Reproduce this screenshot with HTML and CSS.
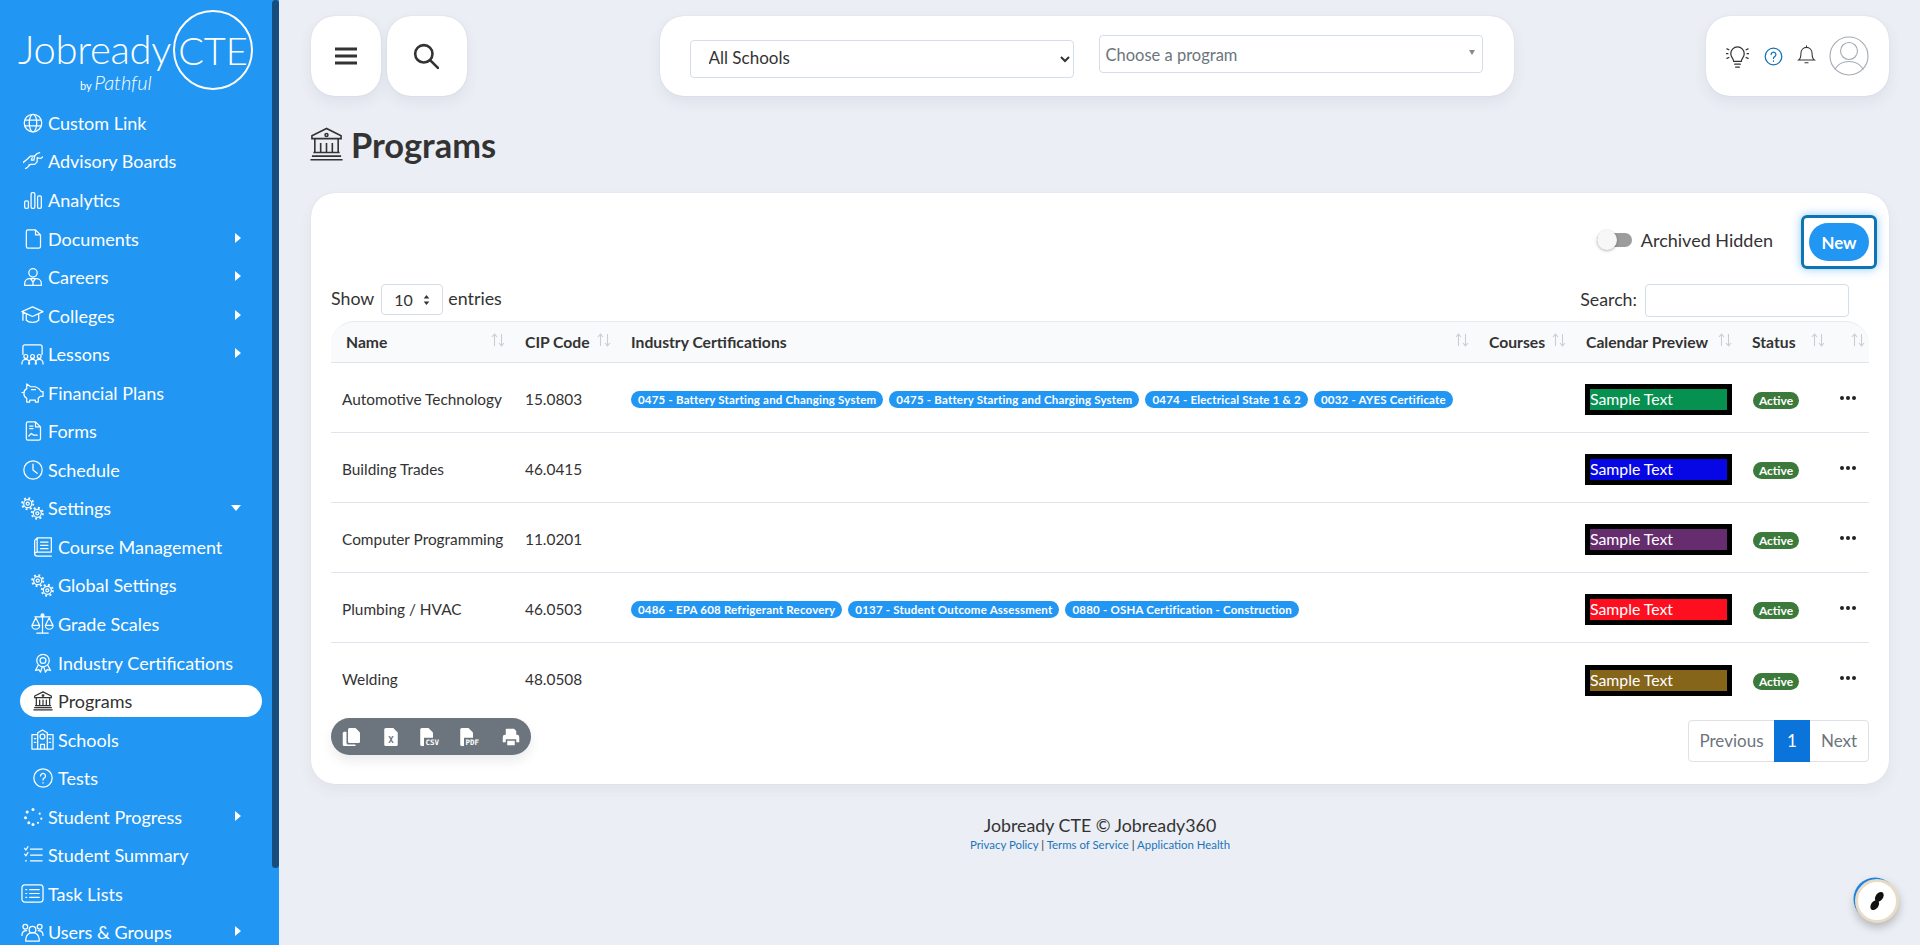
FILE: index.html
```html
<!DOCTYPE html>
<html lang="en">
<head>
  <meta charset="UTF-8">
  <title>Programs</title>
  <link rel="stylesheet" href="styles.css">
</head>
<body>

<aside class="sidebar">
  <div class="scroll-thumb"></div>

  <div class="logo">
    <span class="logo-word">Jobready</span>
    <span class="logo-circle">CTE</span>
    <span class="logo-by">by <b>Pathful</b></span>
  </div>

  <nav class="nav">
    <a class="nav-item"><svg class="ico" viewBox="0 0 24 24"><circle cx="12" cy="12" r="10.5"/><ellipse cx="12" cy="12" rx="4.5" ry="10.5"/><path d="M2.5 8.5h19M2.500 15.500h19"/></svg>Custom Link</a>
    <a class="nav-item"><svg class="ico" viewBox="0 0 24 24"><path d="M0 14l6-5 3-3h5l3-3 3-1M14 6l-1 5h-3l1-3M24 7l-3 2-4-1v5l-3 3H9l-4 4-2 1M9 16l-2 1"/></svg>Advisory Boards</a>
    <a class="nav-item"><svg class="ico" viewBox="0 0 24 24"><rect x="2" y="13" width="4.500" height="9" rx="1.500"/><rect x="9.700" y="3" width="4.500" height="19" rx="1.500"/><rect x="17.500" y="7" width="4.500" height="15" rx="1.500"/></svg>Analytics</a>
    <a class="nav-item has-sub"><svg class="ico" viewBox="0 0 24 24"><path d="M6 1h9l6 6v14a2 2 0 0 1-2 2H6a2 2 0 0 1-2-2V3a2 2 0 0 1 2-2zM15 1v6h6"/></svg>Documents</a>
    <a class="nav-item has-sub"><svg class="ico" viewBox="0 0 24 24"><circle cx="12" cy="7" r="5"/><path d="M2 22v-2c0-4 3-6 6-6h8c3 0 6 2 6 6v2zM9 14l3 4 3-4M12 18v4"/></svg>Careers</a>
    <a class="nav-item has-sub"><svg class="ico ico-wide" viewBox="0 0 24 24"><path d="M12 3L1 8l11 5 11-5zM5.500 11v6c3 3 10 3 13 0v-6M2 9v8"/></svg>Colleges</a>
    <a class="nav-item has-sub"><svg class="ico ico-wide" viewBox="0 0 24 24"><path d="M2 12V4a2 2 0 0 1 2-2h16a2 2 0 0 1 2 2v8"/><circle cx="5" cy="14" r="2"/><circle cx="12" cy="14" r="2"/><circle cx="19" cy="14" r="2"/><path d="M1 22v-1a4 4 0 0 1 8 0v1M8 22v-1a4 4 0 0 1 8 0v1M15 22v-1a4 4 0 0 1 8 0v1"/></svg>Lessons</a>
    <a class="nav-item"><svg class="ico ico-wide" viewBox="0 0 24 24"><path d="M6 8V3l4 3h5c3 1 5 3 6 5h2v5h-3l-2 2v4h-3v-2H9v2H6v-4c-2-1-3-3-3-5 0-2 1-4 3-5zM11 9h4"/><path d="M1 12h2"/></svg>Financial Plans</a>
    <a class="nav-item"><svg class="ico" viewBox="0 0 24 24"><path d="M6 1h9l6 6v14a2 2 0 0 1-2 2H6a2 2 0 0 1-2-2V3a2 2 0 0 1 2-2zM15 1v6h6M8 6h4M8 9h4M7 18l3-3 3 2 4 0"/></svg>Forms</a>
    <a class="nav-item"><svg class="ico" viewBox="0 0 24 24"><circle cx="12" cy="12" r="11"/><path d="M12 5v7l5 4"/></svg>Schedule</a>
    <a class="nav-item has-open"><svg class="ico ico-wide" viewBox="0 0 24 24"><circle cx="7" cy="7" r="1.600"/><circle cx="7" cy="7" r="4.200"/><circle cx="7" cy="7" r="5.800" class="teeth"/><circle cx="17" cy="17" r="1.600"/><circle cx="17" cy="17" r="4.200"/><circle cx="17" cy="17" r="5.800" class="teeth"/></svg>Settings</a>
    <a class="nav-item sub"><svg class="ico" viewBox="0 0 24 24"><path d="M5 18V1h17v17zM5 18c-2 0-3 1-3 2.500S3 23 5 23h17M2 20V4l3-3M9 6h9M9 10h9M9 14h9"/></svg>Course Management</a>
    <a class="nav-item sub"><svg class="ico ico-wide" viewBox="0 0 24 24"><circle cx="7" cy="7" r="1.600"/><circle cx="7" cy="7" r="4.200"/><circle cx="7" cy="7" r="5.800" class="teeth"/><circle cx="17" cy="17" r="1.600"/><circle cx="17" cy="17" r="4.200"/><circle cx="17" cy="17" r="5.800" class="teeth"/></svg>Global Settings</a>
    <a class="nav-item sub"><svg class="ico ico-wide" viewBox="0 0 24 24"><path d="M12 3v19M6 22h12M4 5h16"/><circle cx="12" cy="3.500" r="1.500"/><path d="M5 6l-4 8a4 4 0 0 0 8 0zM19 6l-4 8a4 4 0 0 0 8 0zM1 14h8M15 14h8"/></svg>Grade Scales</a>
    <a class="nav-item sub"><svg class="ico" viewBox="0 0 24 24"><circle cx="12" cy="9" r="7.500"/><circle cx="12" cy="9" r="3.500"/><path d="M6 15l-3 6 4-1 2 3 2-6M18 15l3 6-4-1-2 3-2-6"/></svg>Industry Certifications</a>
    <a class="nav-item sub active"><svg class="ico" viewBox="0 0 24 24"><path d="M12 1L2 6v2h20V6zM4 8v9M20 8v9M8 11v6M12 11v6M16 11v6M3 17.500h18M2 20h20M1 22.500h22"/><circle cx="12" cy="5.500" r="1"/></svg>Programs</a>
    <a class="nav-item sub"><svg class="ico ico-wide" viewBox="0 0 24 24"><path d="M1 22V7h6V5l5-3 5 3v2h6v15zM7 7v15M17 7v15M10 22v-5h4v5M3.500 11h1.500M3.500 15h1.500M19 11h1.500M19 15h1.500"/><circle cx="12" cy="9" r="2.500"/></svg>Schools</a>
    <a class="nav-item sub"><svg class="ico" viewBox="0 0 24 24"><circle cx="12" cy="12" r="11"/><path d="M9 9.500a3 3 0 1 1 4.500 2.600c-1 .6-1.500 1.200-1.500 2.400M12 17.500v.5"/></svg>Tests</a>
    <a class="nav-item has-sub"><svg class="ico dots" viewBox="0 0 24 24"><circle cx="12" cy="3" r="1.800"/><circle cx="5" cy="6" r="1.800"/><circle cx="20" cy="8" r="1.300"/><circle cx="3" cy="13" r="1.800"/><circle cx="22" cy="14" r="1.300"/><circle cx="7" cy="19" r="1.800"/><circle cx="18" cy="19" r="1.300"/><circle cx="12" cy="21" r="1.800"/></svg>Student Progress</a>
    <a class="nav-item"><svg class="ico" viewBox="0 0 24 24"><path d="M9 5h14M9 12h14M9 19h14M2 4l1.500 2L6 2M2 11l1.500 2L6 9M3 19h1"/></svg>Student Summary</a>
    <a class="nav-item"><svg class="ico ico-wide" viewBox="0 0 24 24"><rect x="1" y="3" width="22" height="18" rx="3"/><path d="M5 8h1M5 12h1M5 16h1M9 8h10M9 12h10M9 16h10"/></svg>Task Lists</a>
    <a class="nav-item has-sub"><svg class="ico ico-wide" viewBox="0 0 24 24"><circle cx="12" cy="9" r="3.500"/><circle cx="4.500" cy="6" r="2.500"/><circle cx="19.500" cy="6" r="2.500"/><path d="M5 21v-2a6 6 0 0 1 14 0v2zM1 15c0-3 2-5 5-5M23 15c0-3-2-5-5-5"/></svg>Users &amp; Groups</a>
  </nav>
</aside>

<main class="main">
  <header class="topbar">
    <div class="top-left">
      <button class="top-btn"><svg class="top-ico" viewBox="0 0 24 24"><path d="M1 5h22M1 12h22M1 19h22"/></svg></button>
      <button class="top-btn"><svg class="top-ico thin" viewBox="0 0 24 24"><circle cx="10" cy="10" r="8"/><path d="M16 16l7 7"/></svg></button>
    </div>

    <div class="top-filters">
      <select class="school-select"><option>All Schools</option></select>
      <div class="program-select">Choose a program<span class="caret"></span></div>
    </div>

    <div class="top-right">
      <svg class="bulb" viewBox="0 0 24 24"><path d="M8 17c0-3-3-4-3-8a7 7 0 0 1 14 0c0 4-3 5-3 8zM9 20h6M10 23h4M1 4l2 1M1 14l2-1M23 4l-2 1M23 14l-2-1M0 9h2M22 9h2"/></svg>
      <svg class="help" viewBox="0 0 24 24"><circle cx="12" cy="12" r="10.500"/><path d="M9 9.500a3 3 0 1 1 4.500 2.600c-1 .6-1.500 1.200-1.500 2.400M12 17.500v.5"/></svg>
      <svg class="bell" viewBox="0 0 24 24"><path d="M2 19c3-2 3-5 3-9a7 7 0 0 1 14 0c0 4 0 7 3 9zM10 22.500h4M12 3V1"/></svg>
      <svg class="avatar" viewBox="0 0 40 40"><circle cx="20" cy="20" r="19"/><circle cx="20" cy="15" r="8.500"/><path d="M6 33c3-5 8-7.500 14-7.500S31 28 34 33"/></svg>
    </div>
  </header>

  <h1 class="page-title"><svg class="title-ico" viewBox="0 0 24 24"><path d="M12 1L2 6v2h20V6zM4 8v9M20 8v9M8 11v6M12 11v6M16 11v6M3 17.500h18M2 20h20M1 22.500h22"/><circle cx="12" cy="5.500" r="1"/></svg>Programs</h1>

  <section class="card">
    <div class="card-tools">
      <span class="toggle"><span class="toggle-knob"></span></span>
      <span class="toggle-label">Archived Hidden</span>
      <span class="new-frame"><button class="new-btn">New</button></span>
    </div>

    <div class="table-tools">
      <div class="show-entries">Show <span class="length-box">10<svg class="updown" viewBox="0 0 10 16"><path d="M5 1l4 5H1zM5 15l4-5H1z"/></svg></span> entries</div>
      <div class="search-box">Search: <input class="search-input" type="text"></div>
    </div>

    <table class="programs">
      <thead>
        <tr>
          <th class="col-name"><div class="th-in">Name<svg class="sort" viewBox="0 0 14 14"><path d="M3.500 13V1M1 4l2.500-3L6 4M10.500 1v12M8 10l2.500 3 2.500-3"/></svg></div></th>
          <th class="col-cip"><div class="th-in">CIP Code<svg class="sort" viewBox="0 0 14 14"><path d="M3.500 13V1M1 4l2.500-3L6 4M10.500 1v12M8 10l2.500 3 2.500-3"/></svg></div></th>
          <th class="col-cert"><div class="th-in">Industry Certifications<svg class="sort" viewBox="0 0 14 14"><path d="M3.500 13V1M1 4l2.500-3L6 4M10.500 1v12M8 10l2.500 3 2.500-3"/></svg></div></th>
          <th class="col-courses"><div class="th-in">Courses<svg class="sort" viewBox="0 0 14 14"><path d="M3.500 13V1M1 4l2.500-3L6 4M10.500 1v12M8 10l2.500 3 2.500-3"/></svg></div></th>
          <th class="col-cal"><div class="th-in">Calendar Preview<svg class="sort" viewBox="0 0 14 14"><path d="M3.500 13V1M1 4l2.500-3L6 4M10.500 1v12M8 10l2.500 3 2.500-3"/></svg></div></th>
          <th class="col-status"><div class="th-in">Status<svg class="sort" viewBox="0 0 14 14"><path d="M3.500 13V1M1 4l2.500-3L6 4M10.500 1v12M8 10l2.500 3 2.500-3"/></svg></div></th>
          <th class="col-act"><div class="th-in"><svg class="sort" viewBox="0 0 14 14"><path d="M3.500 13V1M1 4l2.500-3L6 4M10.500 1v12M8 10l2.500 3 2.500-3"/></svg></div></th>
        </tr>
      </thead>
      <tbody>
        <tr>
          <td>Automotive Technology</td>
          <td>15.0803</td>
          <td><div class="certs"><span class="pill">0475 - Battery Starting and Changing System</span><span class="pill">0475 - Battery Starting and Charging System</span><span class="pill">0474 - Electrical State 1 &amp; 2</span><span class="pill">0032 - AYES Certificate</span></div></td>
          <td></td>
          <td><div class="sample green">Sample Text</div></td>
          <td><span class="status">Active</span></td>
          <td><span class="more"><i></i><i></i><i></i></span></td>
        </tr>
        <tr>
          <td>Building Trades</td>
          <td>46.0415</td>
          <td></td>
          <td></td>
          <td><div class="sample blue">Sample Text</div></td>
          <td><span class="status">Active</span></td>
          <td><span class="more"><i></i><i></i><i></i></span></td>
        </tr>
        <tr>
          <td>Computer Programming</td>
          <td>11.0201</td>
          <td></td>
          <td></td>
          <td><div class="sample purple">Sample Text</div></td>
          <td><span class="status">Active</span></td>
          <td><span class="more"><i></i><i></i><i></i></span></td>
        </tr>
        <tr>
          <td>Plumbing / HVAC</td>
          <td>46.0503</td>
          <td><div class="certs"><span class="pill">0486 - EPA 608 Refrigerant Recovery</span><span class="pill">0137 - Student Outcome Assessment</span><span class="pill">0880 - OSHA Certification - Construction</span></div></td>
          <td></td>
          <td><div class="sample red">Sample Text</div></td>
          <td><span class="status">Active</span></td>
          <td><span class="more"><i></i><i></i><i></i></span></td>
        </tr>
        <tr>
          <td>Welding</td>
          <td>48.0508</td>
          <td></td>
          <td></td>
          <td><div class="sample olive">Sample Text</div></td>
          <td><span class="status">Active</span></td>
          <td><span class="more"><i></i><i></i><i></i></span></td>
        </tr>
      </tbody>
    </table>

    <div class="table-foot">
      <div class="export">
        <button class="exp-btn"><svg viewBox="0 0 24 24"><path d="M10 0h8l6 6v12a2 2 0 0 1-2 2H10a2 2 0 0 1-2-2V2a2 2 0 0 1 2-2z"/><path d="M6 5v15a2 2 0 0 0 2 2h10v2H3a2 2 0 0 1-2-2V7a2 2 0 0 1 2-2z"/></svg></button>
        <button class="exp-btn"><svg viewBox="0 0 24 24"><path d="M5 0h10l6 6v16a2 2 0 0 1-2 2H5a2 2 0 0 1-2-2V2a2 2 0 0 1 2-2z"/><text x="12" y="20" class="file-tag dark">X</text></svg></button>
        <button class="exp-btn wide"><svg viewBox="0 0 30 24"><path d="M5 0h9l6 6v17a1 1 0 0 1-1 1H5a2 2 0 0 1-2-2V2a2 2 0 0 1 2-2z"/><rect x="8" y="13" width="22" height="11" fill="#6c757d"/><text x="19" y="23" class="file-tag">CSV</text></svg></button>
        <button class="exp-btn wide"><svg viewBox="0 0 30 24"><path d="M5 0h9l6 6v17a1 1 0 0 1-1 1H5a2 2 0 0 1-2-2V2a2 2 0 0 1 2-2z"/><rect x="8" y="13" width="22" height="11" fill="#6c757d"/><text x="19" y="23" class="file-tag">PDF</text></svg></button>
        <button class="exp-btn"><svg viewBox="0 0 24 24"><path d="M6 1h10l3 3v5H5V2a1 1 0 0 1 1-1zM1 12a3 3 0 0 1 3-3h16a3 3 0 0 1 3 3v7h-4v-4H5v4H1zM7 17h10v6H7z"/></svg></button>
      </div>

      <div class="pager">
        <a class="page-link prev">Previous</a>
        <a class="page-link current">1</a>
        <a class="page-link next">Next</a>
      </div>
    </div>
  </section>

  <footer class="foot">
    <div class="foot-main">Jobready CTE © Jobready360</div>
    <div class="foot-links"><a>Privacy Policy</a> | <a>Terms of Service</a> | <a>Application Health</a></div>
  </footer>

  <div class="float-btn"><svg viewBox="0 0 24 24"><ellipse cx="14.500" cy="7.500" rx="4" ry="6" transform="rotate(35 14.500 7.500)"/><ellipse cx="9.500" cy="16.500" rx="4" ry="6" transform="rotate(35 9.500 16.500)"/></svg></div>
</main>

</body>
</html>
```
FILE: styles.css
```css
* { box-sizing: border-box; }
html, body { height: 100%; }
body {
  margin: 0;
  display: flex;
  height: 945px;
  overflow: hidden;
  background: #ebeef4;
  color: #333;
  font-family: "Lato", "Noto Sans", sans-serif;
  font-size: 15px;
}
button { font-family: inherit; border: 0; }

/* sidebar */
.sidebar {
  position: relative;
  width: 279px;
  flex: none;
  background: #2196f3;
  color: #fff;
  overflow: hidden;
}
.scroll-thumb {
  position: absolute;
  right: 0;
  top: 0;
  width: 7px;
  height: 868px;
  background: #154d7e;
  border-radius: 4px;
}
.logo {
  position: relative;
  height: 103.6px;
}
.logo-word {
  position: absolute;
  left: 18px;
  top: 29px;
  font-size: 40px;
  font-weight: 300;
  letter-spacing: -.3px;
  line-height: 40px;
}
.logo-circle {
  position: absolute;
  left: 173px;
  top: 10px;
  width: 80px;
  height: 80px;
  border: 2px solid #fff;
  border-radius: 50%;
  display: flex;
  align-items: center;
  justify-content: center;
  font-size: 38px;
  font-weight: 300;
}
.logo-by {
  position: absolute;
  left: 80px;
  top: 71px;
  font-size: 11px;
  line-height: 22px;
}
.logo-by b {
  font-size: 20px;
  font-weight: 300;
  font-style: italic;
}
.nav { display: flex; flex-direction: column; }
.nav-item {
  position: relative;
  display: flex;
  align-items: center;
  height: 38.55px;
  padding-left: 23px;
  font-size: 18px;
  white-space: nowrap;
}
.ico {
  width: 20px;
  height: 20px;
  margin-right: 5px;
  flex: none;
  fill: none;
  stroke: #fff;
  stroke-width: 1.500;
  stroke-linecap: round;
  stroke-linejoin: round;
}
.ico-wide {
  width: 23px;
  height: 23px;
  margin-left: -2px;
  margin-right: 4px;
  stroke-width: 1.300;
}
.ico .teeth { stroke-width: 2; stroke-linecap: butt; stroke-dasharray: 2 2.550; }
.ico.dots circle { fill: #fff; stroke: none; }
.nav-item.sub { padding-left: 33px; }
.has-sub::after, .has-open::after {
  content: "";
  position: absolute;
  top: 50%;
}
.has-sub::after {
  right: 38px;
  margin-top: -6px;
  border-left: 6px solid #fff;
  border-top: 5.500px solid transparent;
  border-bottom: 5.500px solid transparent;
}
.has-open::after {
  right: 38px;
  margin-top: -3px;
  border-top: 6px solid #fff;
  border-left: 5.500px solid transparent;
  border-right: 5.500px solid transparent;
}
.nav-item.active { color: #333; z-index: 0; }
.nav-item.active::before {
  content: "";
  position: absolute;
  left: 20px;
  top: 3px;
  width: 242px;
  height: 32px;
  background: #fff;
  border-radius: 16px;
  z-index: -1;
}
.nav-item.active .ico { stroke: #333; }

/* top */
.main {
  position: relative;
  flex: 1;
  min-width: 0;
  padding: 16px 31px 0 32px;
}
.topbar {
  display: flex;
  justify-content: space-between;
  height: 80px;
}
.top-left { display: flex; gap: 6px; }
.top-btn, .top-filters, .top-right {
  background: #fff;
  border-radius: 24px;
  box-shadow: 0 6px 14px rgba(60, 80, 110, .08), 0 0 1px rgba(60, 80, 110, .25);
}
.top-btn {
  display: flex;
  align-items: center;
  justify-content: center;
  width: 80px;
  height: 80px;
  padding: 0;
}
.top-btn:first-child { width: 70px; }
.top-ico {
  width: 24px;
  height: 24px;
  fill: none;
  stroke: #333;
  stroke-width: 3;
}
.top-ico.thin { width: 26px; height: 26px; margin-left: -2px; stroke-width: 2.400; stroke-linecap: round; }
.top-filters {
  display: flex;
  width: 854px;
  padding: 19px 30px 0;
  gap: 25px;
  align-items: flex-start;
}
.school-select {
  width: 384px;
  height: 38px;
  margin-top: 5px;
  padding: 0 14px 3px;
  border: 1px solid #d5dee8;
  border-radius: 4px;
  background: #fff;
  color: #333;
  font-family: inherit;
  font-size: 17px;
}
.program-select {
  position: relative;
  width: 384px;
  height: 38px;
  padding-left: 6px;
  line-height: 38px;
  border: 1px solid #d5dee8;
  border-radius: 4px;
  color: #6c757d;
  font-size: 16.500px;
}
.caret {
  position: absolute;
  right: 7px;
  top: 14px;
  border-top: 5px solid #888;
  border-left: 3.500px solid transparent;
  border-right: 3.500px solid transparent;
}
.top-right {
  display: flex;
  align-items: center;
  width: 183px;
  padding-left: 20px;
}
.top-right svg { fill: none; stroke: #333; stroke-width: 1.300; stroke-linecap: round; }
.bulb { width: 23px; height: 23px; margin-right: 15px; }
.top-right .help { width: 19px; height: 19px; margin-right: 14px; stroke: #1273b8; stroke-width: 1.600; }
.bell { width: 19px; height: 21px; margin-right: 13px; margin-top: -3px; }
.top-right .avatar { width: 40px; height: 40px; stroke: #a3abb3; stroke-width: 1.100; }

.page-title {
  display: flex;
  align-items: center;
  height: 39px;
  margin: 29px 0 0;
  font-size: 34.400px;
  font-weight: 700;
  color: #333;
}
.title-ico {
  width: 35px;
  height: 35px;
  margin-left: -2.500px;
  margin-right: 7.500px;
  fill: none;
  stroke: #333;
  stroke-width: 1.100;
}

/* card */
.card {
  margin-top: 29px;
  height: 591px;
  padding: 22px 20px 0;
  background: #fff;
  border-radius: 24px;
  box-shadow: 0 6px 14px rgba(60, 80, 110, .06), 0 0 1px rgba(60, 80, 110, .2);
}
.card-tools {
  display: flex;
  align-items: center;
  justify-content: flex-end;
  height: 54px;
  margin-right: -8px;
}
.toggle {
  position: relative;
  width: 35px;
  height: 14px;
  margin: -4px 9px 0 0;
  background: #9c9c9c;
  border-radius: 7px;
}
.toggle-knob {
  position: absolute;
  left: 0;
  top: -3px;
  width: 20px;
  height: 20px;
  background: #f7f7f7;
  border-radius: 50%;
  box-shadow: 0 1px 3px rgba(0, 0, 0, .3);
}
.toggle-label { margin: -4px 28px 0 0; font-size: 18px; }
.new-frame {
  display: block;
  width: 76px;
  height: 54px;
  padding: 5px;
  border: 3px solid #0e74b2;
  border-radius: 6px;
  box-shadow: 0 0 10px rgba(33, 150, 243, .5);
}
.new-btn {
  width: 60px;
  height: 38px;
  padding: 0;
  background: #2196f3;
  color: #fff;
  border-radius: 19px;
  font-size: 16.800px;
  font-weight: 700;
}
.table-tools {
  display: flex;
  justify-content: space-between;
  height: 37px;
  margin-top: 15px;
  font-size: 17.800px;
}
.show-entries { display: flex; align-items: flex-start; gap: 5px; line-height: 28px; }
.length-box {
  display: flex;
  align-items: center;
  justify-content: space-between;
  width: 62px;
  height: 31px;
  margin-left: 2px;
  padding: 0 12px;
  border: 1px solid #d5dee8;
  border-radius: 4px;
  font-size: 16px;
}
.updown { width: 7px; height: 12px; fill: #333; }
.search-box { display: flex; align-items: flex-start; gap: 8px; margin-right: 20px; line-height: 30px; font-size: 17.800px; }
.search-input {
  width: 204px;
  height: 33px;
  border: 1px solid #d5dee8;
  border-radius: 4px;
}

/* table */
.programs {
  width: 1538px;
  table-layout: fixed;
  border-collapse: separate;
  border-spacing: 0;
  font-size: 15.400px;
}
.col-name { width: 182px; padding-left: 15px; }
.col-cip { width: 106px; }
.col-cert { width: 858px; }
.col-courses { width: 97px; }
.col-cal { width: 166px; }
.col-status { width: 93px; }
.col-act { width: 36px; }
.programs th {
  height: 42px;
  padding-top: 0;
  padding-bottom: 0;
  background: #f9fafb;
  border-top: 1px solid #e6ebf0;
  border-bottom: 1px solid #dfe5ec;
  font-size: 15.700px;
  font-weight: 700;
  text-align: left;
}
.programs th:not(.col-name) { padding-left: 12px; }
.programs th:first-child { border-top-left-radius: 24px; }
.programs th:last-child { border-top-right-radius: 24px; }
.th-in { display: flex; align-items: center; justify-content: space-between; padding-right: 7px; }
.col-act .th-in { justify-content: flex-end; padding-right: 3px; }
.programs th.col-act { padding-left: 0; }
.sort {
  width: 14px;
  height: 14px;
  margin-top: -5px;
  fill: none;
  stroke: #c9ced3;
  stroke-width: 1.100;
}
.programs td {
  height: 70px;
  padding: 4px 0 0 12px;
  border-bottom: 1px solid #dfe5ec;
  white-space: nowrap;
}
.programs td:nth-child(-n+2) { padding-top: 2px; }
.programs td:first-child { padding-left: 11px; }
.programs tr:last-child td { border-bottom: 0; }
.certs { display: flex; gap: 6px; }
.pill {
  height: 17px;
  padding: 0 7px;
  line-height: 17px;
  background: #2196f3;
  color: #fff;
  border-radius: 9px;
  font-size: 11.500px;
  font-weight: 700;
  letter-spacing: .2px;
}
.sample {
  width: 147px;
  height: 31px;
  margin-left: -1px;
  border: 5px solid #000;
  color: #fff;
  font-size: 15.800px;
  line-height: 20px;
}
.green { background: #079150; }
.blue { background: #0707e6; }
.purple { background: #662d6e; }
.red { background: #fe0f1f; }
.olive { background: #85651a; }
.status {
  display: inline-block;
  width: 46px;
  height: 17px;
  margin-left: 1px;
  line-height: 17px;
  text-align: center;
  background: #3c7a3c;
  color: #fff;
  border-radius: 9px;
  font-size: 12px;
  font-weight: 700;
}
.more { display: inline-flex; gap: 2px; margin: -8px 0 0 -5px; vertical-align: middle; }
.more i { width: 4px; height: 4px; background: #222; border-radius: 50%; }

.table-foot {
  display: flex;
  justify-content: space-between;
  align-items: flex-start;
  margin-top: 5px;
}
.export {
  display: flex;
  align-items: center;
  width: 200px;
  height: 37px;
  background: #6c757d;
  border-radius: 19px;
  box-shadow: 0 6px 12px rgba(0, 0, 0, .08);
}
.exp-btn {
  display: flex;
  justify-content: center;
  width: 40px;
  padding: 0;
  background: none;
}
.exp-btn svg { width: 18px; height: 18px; fill: #fff; }
.exp-btn.wide svg { width: 22.500px; height: 18px; margin-left: -3px; }
.file-tag {
  fill: #fff;
  font-family: "DejaVu Sans Mono", monospace;
  font-size: 10px;
  font-weight: 700;
  text-anchor: middle;
}
.file-tag.dark { fill: #6c757d; font-size: 12px; }
.pager {
  display: flex;
  height: 42px;
  margin-top: 2px;
  border: 1px solid #dfe1e4;
  border-radius: 4px;
}
.page-link {
  line-height: 40px;
  text-align: center;
  color: #6c757d;
  font-size: 17px;
}
.prev { width: 85px; }
.next { width: 58px; }
.page-link.current {
  width: 36px;
  margin: -1px 0;
  line-height: 42px;
  background: #0b74da;
  color: #fff;
}

.foot { margin-top: 31px; text-align: center; }
.foot-main { font-size: 17.800px; line-height: 21px; }
.foot-links { margin-top: 2px; font-size: 11.400px; color: #333; }
.foot-links a { color: #1b75bb; }
.float-btn {
  position: absolute;
  right: 21px;
  bottom: 22px;
  width: 44px;
  height: 44px;
  display: flex;
  align-items: center;
  justify-content: center;
  background: #fff;
  border: 3px solid #e8dcc6;
  border-radius: 50%;
  box-shadow: -2px -2px 0 -0.500px #1b82e0, 0 4px 10px rgba(0, 0, 0, .25);
}
.float-btn svg { width: 22px; height: 22px; fill: #111; }
```
